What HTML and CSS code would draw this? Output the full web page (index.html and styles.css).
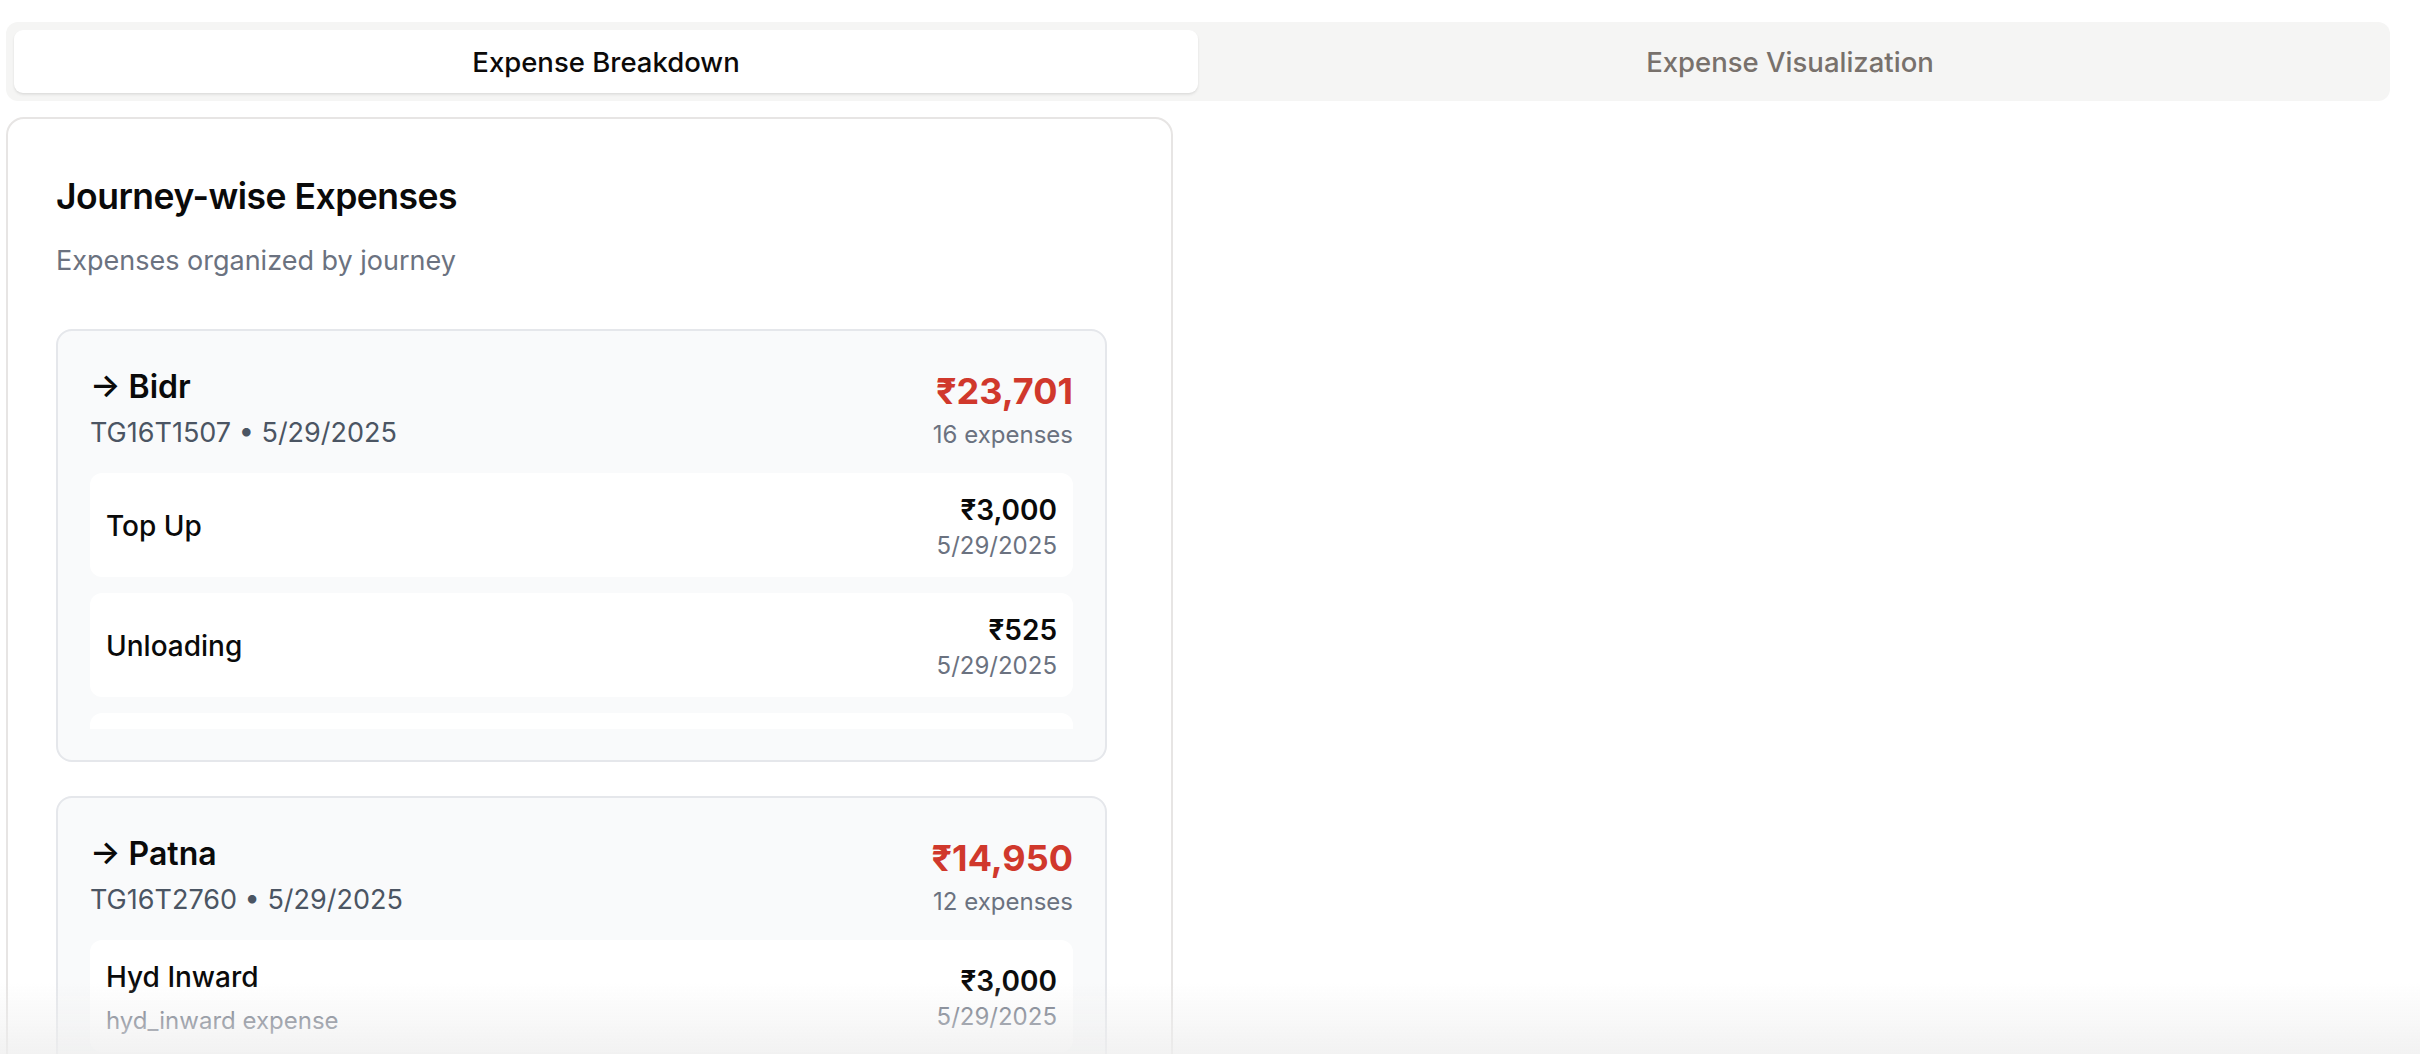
FILE: index.html
```html
<!DOCTYPE html>
<html lang="en">
<head>
<meta charset="utf-8">
<title>Expenses</title>
<link rel="stylesheet" href="styles.css">
</head>
<body>
<div class="page">
  <div class="tabs">
    <div class="tab tab-active">Expense Breakdown</div>
    <div class="tab">Expense Visualization</div>
  </div>

  <div class="layout">
    <section class="card">
      <header class="card-header">
        <h2 class="card-title">Journey-wise Expenses</h2>
        <p class="card-sub">Expenses organized by journey</p>
      </header>

      <div class="journeys">
        <article class="journey">
          <div class="journey-head">
            <div class="journey-info">
              <div class="journey-name">→ Bidr</div>
              <div class="journey-meta">TG16T1507 • 5/29/2025</div>
            </div>
            <div class="journey-totals">
              <div class="journey-amount">₹23,701</div>
              <div class="journey-count">16 expenses</div>
            </div>
          </div>
          <div class="items">
            <div class="item">
              <div class="item-left"><div class="item-name">Top Up</div></div>
              <div class="item-right"><div class="item-amount">₹3,000</div><div class="item-date">5/29/2025</div></div>
            </div>
            <div class="item">
              <div class="item-left"><div class="item-name">Unloading</div></div>
              <div class="item-right"><div class="item-amount">₹525</div><div class="item-date">5/29/2025</div></div>
            </div>
            <div class="item item-hidden"></div>
          </div>
        </article>

        <article class="journey">
          <div class="journey-head">
            <div class="journey-info">
              <div class="journey-name">→ Patna</div>
              <div class="journey-meta">TG16T2760 • 5/29/2025</div>
            </div>
            <div class="journey-totals">
              <div class="journey-amount">₹14,950</div>
              <div class="journey-count">12 expenses</div>
            </div>
          </div>
          <div class="items">
            <div class="item">
              <div class="item-left"><div class="item-name">Hyd Inward</div><div class="item-desc">hyd_inward expense</div></div>
              <div class="item-right"><div class="item-amount">₹3,000</div><div class="item-date">5/29/2025</div></div>
            </div>
          </div>
        </article>
      </div>
    </section>
    <div class="side"></div>
  </div>
</div>
<div class="fade"></div>
</body>
</html>
```

FILE: styles.css
```css
* { box-sizing: border-box; }
html, body { margin: 0; padding: 0; background: #ffffff; }
body {
  font-family: Inter, "Noto Sans", "DejaVu Sans", sans-serif;
  color: #0a0a0a;
  height: 1054px;
  overflow: hidden;
}
.page { margin: 22px 30px 0 6px; }

.tabs {
  display: grid;
  grid-template-columns: 1fr 1fr;
  background: #f5f5f4;
  border-radius: 12px;
  padding: 8px;
}
.tab {
  height: 63px;
  display: flex;
  align-items: center;
  justify-content: center;
  font-size: 27.5px;
  font-weight: 500;
  color: #78716c;
  border-radius: 9px;
}
.tab-active {
  background: #ffffff;
  color: #0c0a09;
  box-shadow: 0 2px 3px rgba(0,0,0,0.07), 0 1px 2px rgba(0,0,0,0.04);
}

.layout {
  margin-top: 16px;
  display: grid;
  grid-template-columns: 1167px 1fr;
}
.card {
  border: 2px solid #e7e5e4;
  border-radius: 18px;
  padding: 0 48px 0 48px;
  background: #fff;
}
.card-header { padding: 50px 0 48px 0; }
.card-title {
  margin: 0;
  font-size: 35.5px;
  line-height: 56px;
  font-weight: 600;
  letter-spacing: -0.5px;
}
.card-sub {
  margin: 16px 0 0 0;
  font-size: 27px;
  line-height: 40px;
  color: #6b7280;
}

.journeys {
  padding-right: 16px;
  display: flex;
  flex-direction: column;
  gap: 34px;
}
.journey {
  background: #f9fafb;
  border: 2px solid #e5e7eb;
  border-radius: 16px;
  padding: 32px 32px 31px 32px;
}
.journey-head {
  display: flex;
  justify-content: space-between;
  align-items: flex-start;
  margin-bottom: 22px;
}
.journey-name {
  font-size: 32px;
  line-height: 48px;
  font-weight: 600;
}
.journey-meta {
  margin-top: 6px;
  font-size: 27px;
  line-height: 32px;
  color: #4b5563;
}
.journey-totals { text-align: right; }
.journey-amount {
  font-size: 36px;
  line-height: 56px;
  font-weight: 700;
  color: #d0382c;
}
.journey-count {
  font-size: 24px;
  line-height: 32px;
  color: #6b7280;
}

.items {
  max-height: 256px;
  overflow: hidden;
  display: flex;
  flex-direction: column;
  gap: 16px;
}
.item {
  flex: none;
  background: #ffffff;
  border-radius: 12px;
  padding: 17px 16px 15px 16px;
  display: flex;
  justify-content: space-between;
  align-items: center;
}
.item-hidden { height: 104px; }
.item-name {
  font-size: 28px;
  line-height: 40px;
  font-weight: 500;
}
.item-desc {
  margin-top: 8px;
  font-size: 24px;
  line-height: 32px;
  color: #6b7280;
}
.item-right { text-align: right; }
.item-amount {
  font-size: 28px;
  line-height: 40px;
  font-weight: 600;
}
.item-date {
  font-size: 24px;
  line-height: 32px;
  color: #6b7280;
}

.fade {
  position: fixed;
  left: 0;
  right: 0;
  bottom: 0;
  height: 72px;
  pointer-events: none;
  background: linear-gradient(to bottom, rgba(238,238,238,0), rgba(238,238,238,0.75));
}
```
